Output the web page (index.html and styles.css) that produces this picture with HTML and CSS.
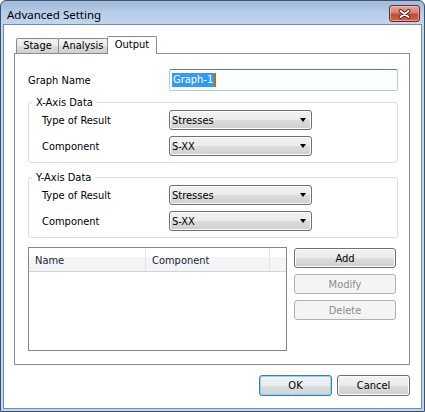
FILE: index.html
```html
<!DOCTYPE html>
<html>
<head>
<meta charset="utf-8">
<link rel="stylesheet" href="styles.css">
</head>
<body>
<div class="window">
  <div class="titlebar">
    <span class="title">Advanced Setting</span>
    <div class="close">
      <svg width="13" height="10" viewBox="0 0 13 10">
        <path d="M2.5 2 L10.5 8 M10.5 2 L2.5 8" stroke="#4e1a1a" stroke-width="3.6" stroke-linecap="round"/>
        <path d="M2.5 2 L10.5 8 M10.5 2 L2.5 8" stroke="#ffffff" stroke-width="2" stroke-linecap="round"/>
      </svg>
    </div>
  </div>
  <div class="client">
    <div class="tabs">
      <div class="tab tab-stage">Stage</div>
      <div class="tab tab-analysis">Analysis</div>
      <div class="tab tab-output active">Output</div>
    </div>
    <div class="panel">
      <div class="row name-row">
        <label class="lbl lbl-wide">Graph Name</label>
        <div class="input"><span class="sel">Graph-1</span><span class="caret"></span></div>
      </div>
      <fieldset class="group group-x">
        <legend>X-Axis Data</legend>
        <div class="row field-row">
          <label class="lbl">Type of Result</label>
          <div class="combo"><span>Stresses</span><i class="arrow"></i></div>
        </div>
        <div class="row field-row">
          <label class="lbl">Component</label>
          <div class="combo"><span>S-XX</span><i class="arrow"></i></div>
        </div>
      </fieldset>
      <fieldset class="group group-y">
        <legend>Y-Axis Data</legend>
        <div class="row field-row">
          <label class="lbl">Type of Result</label>
          <div class="combo"><span>Stresses</span><i class="arrow"></i></div>
        </div>
        <div class="row field-row">
          <label class="lbl">Component</label>
          <div class="combo"><span>S-XX</span><i class="arrow"></i></div>
        </div>
      </fieldset>
      <div class="list-area">
        <div class="list">
          <div class="list-head">
            <div class="col col-name">Name</div>
            <div class="col col-comp">Component</div>
            <div class="col col-rest"></div>
          </div>
        </div>
        <div class="side-buttons">
          <div class="btn">Add</div>
          <div class="btn disabled">Modify</div>
          <div class="btn disabled">Delete</div>
        </div>
      </div>
    </div>
    <div class="footer">
      <div class="btn btn-foot default">OK</div>
      <div class="btn btn-foot">Cancel</div>
    </div>
  </div>
</div>
</body>
</html>
```

FILE: styles.css
```css
* { box-sizing: border-box; }

html, body {
  margin: 0;
  padding: 0;
  background: #ffffff;
}

body {
  font-family: "DejaVu Sans Condensed", "DejaVu Sans", sans-serif;
  font-stretch: condensed;
  font-size: 11px;
  line-height: 13px;
  color: #000000;
}

.window {
  width: 425px;
  height: 412px;
  border: 1px solid #3a5372;
  border-radius: 6px 6px 0 0;
  background: linear-gradient(to bottom, #a7bedc 0px, #a3bbda 3px, #b6cce7 11px, #c2d5ec 23px, #c2d5ec 100%);
  padding: 0 2px 2px 2px;
  display: flex;
  flex-direction: column;
}

.titlebar {
  height: 23px;
  display: flex;
  justify-content: space-between;
  align-items: flex-start;
  padding-left: 4px;
  padding-right: 2px;
}

.title {
  font-family: "Noto Sans", "Open Sans", sans-serif;
  font-stretch: normal;
  font-size: 11.5px;
  line-height: 15px;
  margin-top: 6px;
  color: #000000;
}

.close {
  margin-top: 4px;
  width: 31px;
  height: 17px;
  border: 1px solid #6b2a24;
  border-radius: 3px;
  background: linear-gradient(to bottom, #e6a296 0%, #d9806f 45%, #c4493a 55%, #cf6450 100%);
  box-shadow: inset 0 0 0 1px rgba(255, 215, 205, 0.5);
  display: flex;
  align-items: center;
  justify-content: center;
}

.client {
  flex: 1;
  background: #ffffff;
  border: 1px solid #6f8db1;
  padding: 11px 11px 0 10px;
  display: flex;
  flex-direction: column;
}

/* Tabs */
.tabs {
  display: flex;
  align-items: flex-end;
  margin-left: 2px;
  height: 18px;
  margin-bottom: -1px;
  position: relative;
  z-index: 1;
}

.tab {
  height: 15px;
  margin-bottom: 1px;
  border: 1px solid #898c95;
  border-bottom: none;
  border-radius: 2px 2px 0 0;
  background: linear-gradient(to bottom, #f2f2f2 0%, #ebebeb 50%, #dddddd 50%, #cfcfcf 100%);
  text-align: center;
  line-height: 14px;
}

.tab-stage { width: 43px; }
.tab-analysis { width: 50px; margin-left: -1px; }
.tab-output { width: 50px; margin-left: -1px; }

.tab.active {
  height: 18px;
  margin-bottom: 0;
  background: #ffffff;
  line-height: 15px;
  padding-bottom: 2px;
}

/* Panel */
.panel {
  height: 312px;
  border: 1px solid #898c95;
  padding: 15px 11px 0 13px;
  display: flex;
  flex-direction: column;
}

.row {
  display: flex;
  align-items: center;
}

.lbl {
  flex: 0 0 127px;
}

.lbl-wide {
  flex: 0 0 141px;
}

.name-row {
  height: 22px;
}

.input {
  width: 229px;
  height: 22px;
  border: 1px solid #a9cbe4;
  border-top-color: #4b86b8;
  border-radius: 2px;
  padding-left: 2px;
  display: flex;
  align-items: center;
}

.sel {
  background: #3399ff;
  color: #ffffff;
  padding: 0 1px;
  line-height: 14px;
}

.caret {
  width: 2px;
  height: 14px;
  background: #cc6a00;
}

/* Group boxes */
.group {
  margin: 5px 0 0 0;
  width: 370px;
  border: 1px solid #d5dfe5;
  border-radius: 3px;
  padding: 1px 0 6px 3px;
}

.group-y {
  margin-top: 8px;
}

.group legend {
  padding: 0 4px;
  line-height: 13px;
}

.field-row {
  height: 20px;
  padding-left: 10px;
}

.field-row + .field-row {
  margin-top: 6px;
}

.combo {
  width: 143px;
  height: 20px;
  border: 1px solid #707070;
  border-radius: 3px;
  background: linear-gradient(to bottom, #f2f2f2 0%, #ebebeb 50%, #dddddd 50%, #cfcfcf 100%);
  box-shadow: inset 0 0 0 1px #fbfbfb;
  display: flex;
  align-items: center;
  justify-content: space-between;
  padding: 0 5px 0 2px;
}

.arrow {
  width: 0;
  height: 0;
  border-left: 3.5px solid transparent;
  border-right: 3.5px solid transparent;
  border-top: 4px solid #000000;
}

/* List */
.list-area {
  margin-top: 9px;
  display: flex;
  align-items: flex-start;
}

.list {
  width: 259px;
  height: 104px;
  border: 1px solid #828790;
  background: #ffffff;
}

.list-head {
  display: flex;
  height: 24px;
  border-bottom: 1px solid #d5d5d5;
  background: linear-gradient(to bottom, #ffffff 0%, #ffffff 40%, #f4f5f6 40%, #f3f4f5 100%);
  color: #1b2640;
}

.col {
  height: 23px;
  line-height: 26px;
  padding-left: 6px;
  border-right: 1px solid #e3e5ea;
}

.col-name { width: 117px; }
.col-comp { width: 124px; }
.col-rest { flex: 1; border-right: none; }

.side-buttons {
  margin-left: 7px;
  margin-top: 1px;
  display: flex;
  flex-direction: column;
  gap: 6px;
}

.btn {
  width: 102px;
  height: 20px;
  border: 1px solid #707070;
  border-radius: 3px;
  background: linear-gradient(to bottom, #f2f2f2 0%, #ebebeb 50%, #dddddd 50%, #cfcfcf 100%);
  box-shadow: inset 0 0 0 1px #fbfbfb;
  display: flex;
  align-items: center;
  justify-content: center;
}

.btn.disabled {
  border-color: #adb2b5;
  background: #f4f4f4;
  box-shadow: none;
  color: #8b8b8b;
}

.footer {
  margin-top: 10px;
  display: flex;
  justify-content: flex-end;
  gap: 5px;
}

.btn-foot {
  width: 73px;
  height: 21px;
}

.btn.default {
  border-color: #3c7fb1;
  box-shadow: inset 0 0 0 1px #8fd6f4;
  background: linear-gradient(to bottom, #f0f3f5 0%, #e9edf0 50%, #dadfe2 50%, #cdd3d6 100%);
}
```
